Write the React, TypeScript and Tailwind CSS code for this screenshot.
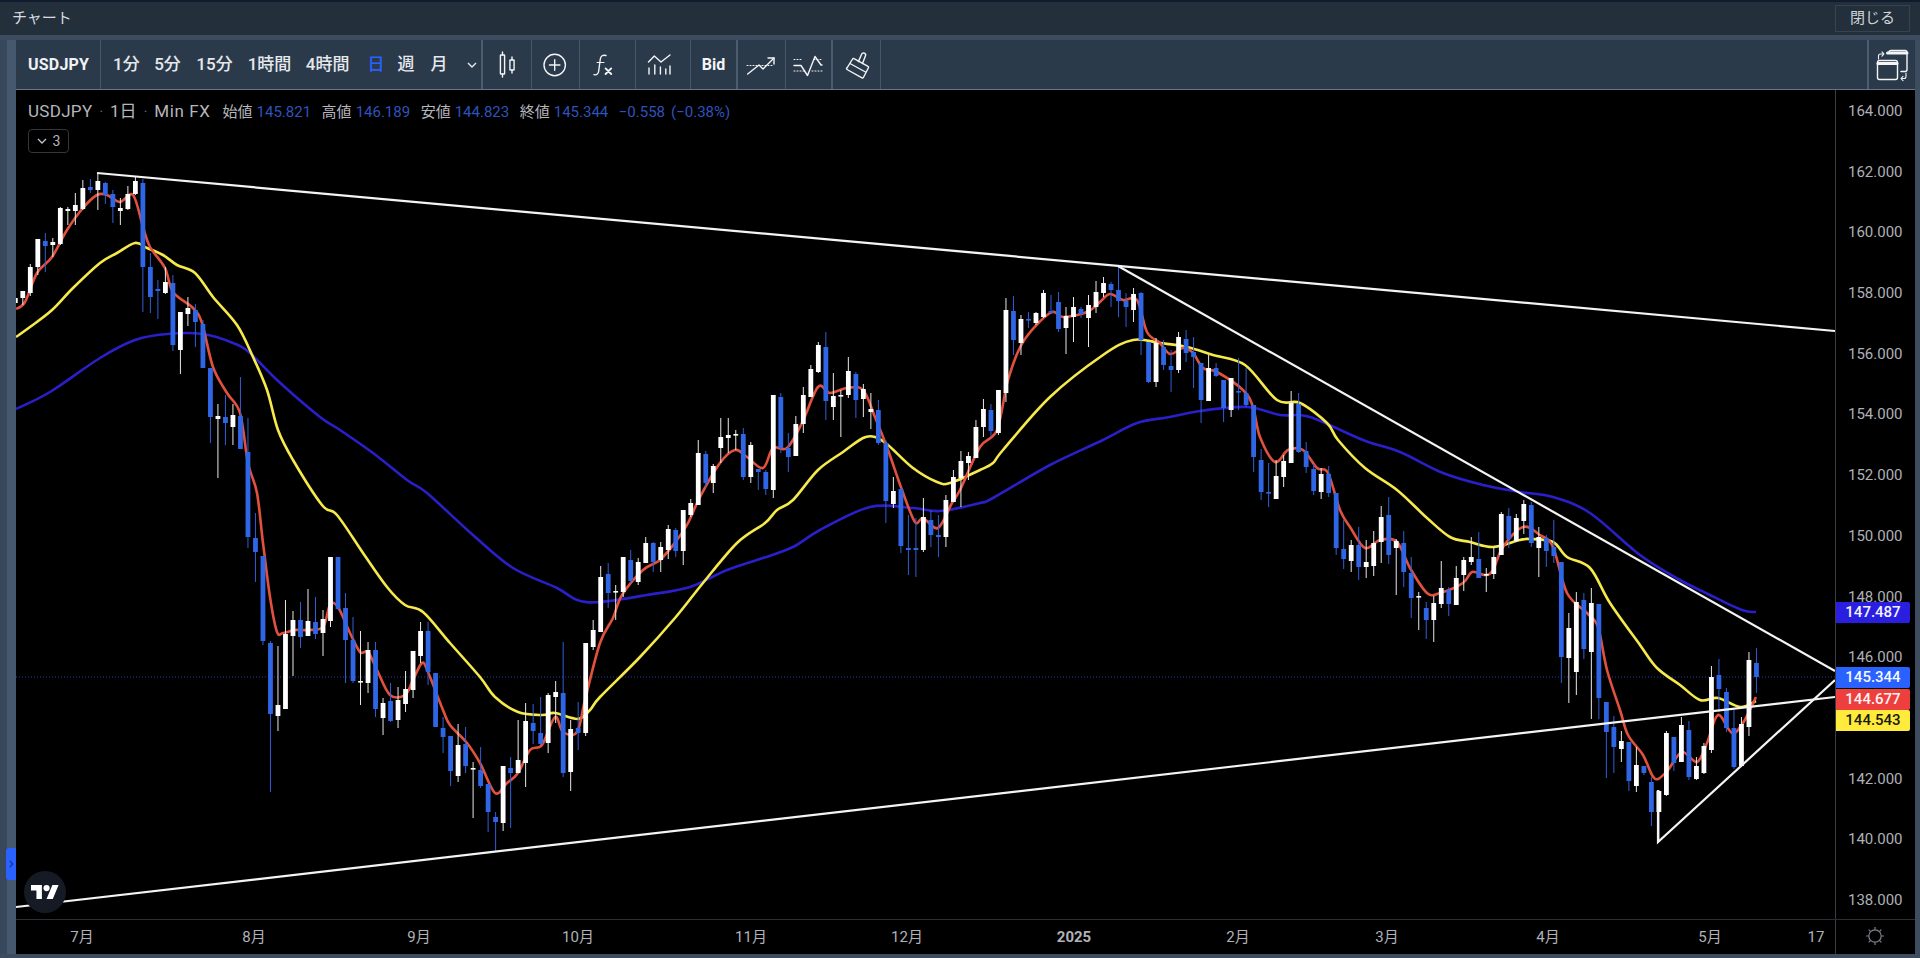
import React from "react";

type C = [number, number, number, number, number];
// bodyTop, bodyBottom, wickTop, wickBottom, blue?
const candles: C[] = [
[298,303,295,307,0],[291,298,291,305,0],[267,293,264,296,0],[239,267,239,275,0],[241,246,233,272,1],[242,245,238,257,0],[208,244,207,245,0],[209,211,207,225,0],[205,211,193,225,0],[188,209,180,210,0],
[187,190,179,193,1],[181,190,173,210,0],[183,195,182,204,1],[194,207,190,223,1],[208,211,198,225,0],[194,209,186,210,0],[181,194,177,195,0],[183,267,179,312,1],[267,297,253,313,1],[289,291,280,319,1],
[282,293,267,294,0],[283,345,275,351,1],[312,350,312,374,0],[308,314,297,326,0],[310,322,304,347,1],[324,368,320,368,1],[368,417,368,443,1],[416,419,404,478,0],[417,423,395,445,1],[415,427,404,445,0],
[416,449,377,449,1],[452,537,418,548,1],[538,552,513,582,1],[556,641,556,645,1],[643,714,641,792,1],[705,716,646,731,0],[634,709,600,709,0],[620,636,611,676,0],[620,637,602,648,1],[621,636,589,636,0],
[622,634,597,639,1],[619,633,610,656,0],[557,621,557,627,0],[557,609,557,610,1],[608,640,593,683,1],[640,681,617,683,1],[681,682,631,705,0],[650,683,642,693,0],[650,709,642,717,1],[703,718,698,735,0],
[701,721,683,722,1],[700,720,687,728,0],[689,704,671,712,0],[651,690,651,698,0],[631,656,622,663,0],[631,672,622,685,1],[673,727,673,727,1],[728,737,717,753,1],[736,771,736,786,1],[745,776,724,782,0],
[744,766,727,773,1],[768,769,762,818,0],[770,786,747,788,1],[784,812,784,832,1],[817,822,812,852,1],[766,823,766,831,0],[768,773,757,828,1],[760,773,720,773,0],[721,763,703,787,0],[723,731,704,744,1],
[733,744,697,745,1],[695,743,693,753,0],[692,697,681,723,0],[693,773,642,777,1],[729,772,720,791,0],[728,733,702,750,1],[643,733,643,736,0],[630,647,620,650,0],[577,632,566,632,0],[574,593,563,608,1],
[591,592,585,620,0],[557,592,557,597,0],[560,581,550,583,1],[562,582,558,585,0],[543,563,537,563,0],[543,562,542,572,1],[547,560,542,572,0],[529,550,525,559,0],[530,551,528,557,1],[510,551,510,565,0],
[503,515,499,517,0],[453,505,440,505,0],[454,483,451,488,1],[466,483,464,493,0],[437,448,418,463,0],[435,438,418,453,0],[434,435,430,450,0],[434,477,428,480,1],[445,477,442,483,0],[469,472,469,490,1],
[472,489,470,495,1],[395,490,395,498,0],[397,448,393,453,1],[448,457,433,472,1],[424,456,416,456,0],[395,424,387,433,0],[369,397,365,397,0],[345,372,342,373,0],[347,401,332,420,1],[396,407,373,420,0],
[395,396,390,437,0],[371,395,357,398,0],[374,400,372,418,1],[389,399,384,417,0],[409,412,393,429,0],[410,443,400,445,1],[443,501,440,523,1],[491,504,477,508,0],[489,546,488,553,1],[548,550,515,575,1],
[548,550,518,577,1],[517,550,498,552,0],[520,535,510,547,1],[535,537,515,557,1],[500,537,495,547,0],[477,502,470,502,0],[461,478,451,507,0],[456,463,452,480,0],[427,458,420,458,0],[409,427,399,437,0],
[410,431,404,437,1],[390,433,390,435,0],[310,393,298,402,0],[311,340,296,355,1],[319,343,315,355,0],[319,320,312,328,1],[313,323,312,325,0],[293,317,290,318,0],[311,313,295,313,1],[302,329,292,332,1],
[316,328,307,354,0],[307,317,297,342,0],[309,314,307,318,1],[305,318,295,347,0],[292,307,281,313,0],[283,293,277,297,0],[284,290,282,307,1],[290,301,267,317,1],[301,307,293,327,1],[294,310,288,322,0],
[293,340,292,355,1],[342,382,342,383,1],[343,382,338,387,0],[347,365,340,370,1],[366,370,350,392,1],[337,370,332,373,0],[339,353,330,362,1],[352,357,337,388,1],[363,400,363,423,1],[368,401,355,401,0],
[368,376,363,377,1],[380,408,380,422,1],[378,410,378,417,0],[391,392,358,410,1],[393,405,368,407,1],[405,457,405,472,1],[460,492,449,500,1],[492,493,463,507,1],[476,499,460,499,0],[461,477,455,487,0],
[403,463,391,463,0],[404,452,393,453,1],[451,467,442,473,1],[469,491,464,495,1],[474,492,468,499,0],[474,493,466,497,1],[493,548,493,555,1],[549,559,520,569,1],[545,561,540,572,0],[545,567,527,580,1],
[562,567,540,578,0],[543,566,531,576,0],[517,542,506,563,0],[515,555,497,564,1],[541,548,539,595,0],[543,572,531,587,1],[573,598,557,618,1],[596,597,592,630,0],[608,620,602,639,1],[603,620,596,642,0],
[588,604,561,608,0],[590,604,587,616,1],[578,605,566,605,0],[560,575,557,591,0],[557,562,537,565,0],[559,578,532,578,1],[574,575,568,592,0],[557,574,547,579,0],[514,555,512,555,0],[516,539,508,548,1],
[518,541,514,542,0],[504,521,500,534,0],[505,543,502,547,1],[537,548,527,577,0],[538,551,535,567,1],[547,556,520,563,1],[562,657,562,683,1],[628,658,613,703,0],[602,672,592,695,0],[600,649,593,659,1],
[603,652,588,719,0],[604,698,604,719,1],[702,732,702,778,1],[727,747,716,773,1],[741,749,731,762,0],[742,781,742,791,1],[765,786,747,792,0],[766,773,766,775,1],[782,812,777,826,1],[791,812,790,842,0],
[733,795,731,796,0],[737,763,737,771,1],[725,762,717,762,0],[730,777,721,780,1],[766,779,757,780,0],[746,773,743,774,0],[677,750,666,753,0],[675,689,659,712,1],[692,728,688,732,1],[728,767,710,769,1],
[724,766,717,767,0],[660,727,652,736,0],[663,677,648,693,1],
];

const red = "16,309 25,302 37,273 52,257 67,230 83,208 97,195 107,195 120,202 133,195 143,227 150,247 165,268 173,292 193,308 202,323 213,367 227,393 240,413 248,463 257,493 263,543 270,597 277,632 283,633 295,630 308,630 323,627 330,605 338,607 350,633 360,652 368,652 377,670 390,695 405,695 413,680 422,663 428,672 443,710 450,725 467,743 480,763 495,793 507,783 518,773 530,750 542,745 555,717 563,732 577,732 585,700 600,643 613,618 622,595 643,570 660,560 677,540 688,523 700,497 720,463 735,450 747,457 763,468 773,448 787,448 802,423 818,387 830,393 847,388 863,390 875,417 888,450 902,490 915,522 923,518 938,528 952,503 960,490 980,447 997,430 1008,380 1023,342 1050,313 1063,317 1087,312 1100,302 1110,294 1123,300 1137,300 1147,332 1160,343 1170,354 1183,348 1193,353 1203,368 1217,372 1243,390 1253,407 1260,437 1275,462 1288,450 1303,450 1317,468 1328,473 1340,510 1350,527 1365,548 1380,540 1397,542 1410,568 1427,593 1440,593 1463,583 1472,572 1485,575 1493,570 1503,547 1523,527 1540,535 1553,547 1567,593 1587,613 1598,627 1607,670 1620,710 1628,735 1643,755 1652,775 1658,779 1668,770 1682,752 1697,762 1707,743 1718,715 1732,733 1743,723 1756,697";
const yellow = "16,337 30,327 52,310 73,288 100,263 117,253 135,243 147,248 163,255 177,265 195,273 213,297 237,325 253,357 267,390 278,430 293,460 322,505 337,515 363,553 387,587 405,605 423,612 450,643 480,677 495,697 518,712 542,715 555,713 578,719 590,710 600,697 640,657 675,618 703,583 737,543 765,523 777,510 793,500 818,470 843,452 863,438 875,437 888,445 913,468 937,482 950,483 980,470 993,463 1003,450 1050,397 1103,355 1133,340 1160,343 1187,347 1213,355 1245,365 1277,400 1300,403 1327,423 1338,440 1365,468 1397,490 1427,518 1450,537 1470,542 1493,547 1520,540 1530,539 1553,542 1567,557 1590,568 1610,603 1640,645 1657,668 1680,685 1700,700 1718,698 1740,707 1756,701";
const navy = "16,409 50,392 100,358 135,340 167,334 203,334 233,343 250,353 277,380 320,417 340,430 373,453 407,480 427,493 473,535 513,568 557,588 577,600 600,602 647,595 690,587 727,570 763,558 793,547 820,530 870,507 913,508 940,511 980,503 993,498 1050,465 1103,440 1137,423 1170,417 1200,411 1247,407 1280,415 1310,417 1363,440 1400,452 1443,473 1483,485 1520,492 1553,497 1590,513 1640,555 1680,580 1710,595 1742,610 1756,612";

// Catmull-Rom smoothing of a polyline into a cubic path
function smooth(points: string): string {
  const p = points.split(" ").map((s) => s.split(",").map(Number));
  let d = `M${p[0][0]} ${p[0][1]}`;
  for (let i = 0; i < p.length - 1; i++) {
    const a = p[Math.max(i - 1, 0)];
    const b = p[i];
    const c = p[i + 1];
    const e = p[Math.min(i + 2, p.length - 1)];
    const c1x = b[0] + (c[0] - a[0]) / 6;
    const c1y = b[1] + (c[1] - a[1]) / 6;
    const c2x = c[0] - (e[0] - b[0]) / 6;
    const c2y = c[1] - (e[1] - b[1]) / 6;
    d += `C${c1x.toFixed(1)} ${c1y.toFixed(1)} ${c2x.toFixed(1)} ${c2y.toFixed(1)} ${c[0]} ${c[1]}`;
  }
  return d;
}

const prices = ["164.000","162.000","160.000","158.000","156.000","154.000","152.000","150.000","148.000","146.000","144.000","142.000","140.000","138.000"];

const W = 1819;
const H = 829;

function Chart() {
  return (
    <svg viewBox={`16 90 ${W} ${H}`} className="block h-full w-full" aria-hidden="true">
      <line x1="16" y1="677" x2="1835" y2="677" stroke="#2a48c0" strokeWidth="1" strokeDasharray="1 2" opacity="0.85" />
      <path d={smooth(navy)} fill="none" stroke="#2a1fc8" strokeWidth="2.6" strokeLinejoin="round" />
      <path d={smooth(yellow)} fill="none" stroke="#f6ea4a" strokeWidth="2.6" strokeLinejoin="round" />
      <path d={smooth(red)} fill="none" stroke="#e2513e" strokeWidth="2.6" strokeLinejoin="round" />
      {candles.map((c, i) => {
        const x = 15.3 + 7.505 * i;
        const col = c[4] ? "#2f66e6" : "#ffffff";
        return (
          <g key={i}>
            <line x1={x} x2={x} y1={c[2]} y2={c[3]} stroke={c[4] ? "#2f5fd8" : "#e8e8e8"} strokeWidth="1" />
            <rect x={x - 2.4} y={c[0]} width="4.8" height={Math.max(c[1] - c[0], 1.6)} fill={col} />
          </g>
        );
      })}
      <g stroke="#f4f4f4" strokeWidth="2.2" fill="none">
        <line x1="97" y1="173" x2="1835" y2="331" />
        <line x1="1118" y1="266" x2="1835" y2="671" />
        <line x1="16" y1="907" x2="1835" y2="697" />
        <polyline points="1658,790 1658,842 1835,680" />
      </g>
    </svg>
  );
}

const sep = "border-r border-[#47566a]";
const sepThick = "border-r-2 border-[#4d5c70]";

function Sv({ vb, w, children }: { vb: string; w: string; children: React.ReactNode }) {
  return (
    <svg viewBox={vb} className={`block h-[49px] ${w}`} fill="none" stroke="#f2f4f6" strokeWidth="1.4" strokeLinecap="round" strokeLinejoin="round" aria-hidden="true">
      {children}
    </svg>
  );
}

function Toolbar() {
  return (
    <div className="flex h-[50px] shrink-0 border-b border-[#66758a] bg-[#2b3a4b] text-[17px] font-medium text-[#e6e9ec]">
      <div className={`flex w-[85px] items-center pl-[12px] text-[16px] font-bold tracking-[0.2px] text-[#f0f2f4] ${sep}`}>USDJPY</div>
      <div className={`flex w-[382px] items-center pl-[12px] ${sepThick}`}>
        <span>1分</span>
        <span className="ml-[14.5px]">5分</span>
        <span className="ml-[15.5px]">15分</span>
        <span className="ml-[15px]">1時間</span>
        <span className="ml-[14.5px]">4時間</span>
        <span className="ml-[18px] text-[#2962ff]">日</span>
        <span className="ml-[13px]">週</span>
        <span className="ml-[16px]">月</span>
        <svg viewBox="0 0 10 6" className="ml-[19px] h-[6px] w-[10px]" fill="none" stroke="#e6e9ec" strokeWidth="1.4" aria-hidden="true"><path d="M1 1l4 4 4-4" /></svg>
      </div>
      <div className={`w-[49px] ${sep}`}>
        <Sv vb="484 40 48 49" w="w-[48px]">
          <path d="M503.5 52v3M503.5 74v3M513 57v3M513 70v3" />
          <rect x="501.4" y="55" width="4.2" height="19" rx="0.5" />
          <rect x="510.9" y="60" width="4.2" height="10" rx="0.5" />
        </Sv>
      </div>
      <div className={`w-[48px] ${sep}`}>
        <Sv vb="533 40 47 49" w="w-[47px]">
          <circle cx="555.7" cy="65" r="10.7" />
          <path d="M550.5 65h10.4M555.7 59.8v10.4" />
        </Sv>
      </div>
      <div className={`w-[56px] ${sep}`}>
        <Sv vb="581 40 55 49" w="w-[55px]">
          <path d="M607 55.5c-3.2-1-5.2.6-5.7 3.5l-1.6 12c-.4 3-2.3 4.6-4.7 3.6" />
          <path d="M598 62.5h7" strokeWidth="1" />
          <path d="M606.6 68.4l5.6 5.6M612.2 68.4l-5.6 5.6" strokeWidth="1.9" />
        </Sv>
      </div>
      <div className={`w-[55px] ${sep}`}>
        <Sv vb="637 40 54 49" w="w-[54px]">
          <path d="M649.5 62l5.8-6 6.7 6 9-7" />
          <path d="M650 68v6M655.8 65v9M661.4 67v7M666.8 69v5M671 66v8" />
        </Sv>
      </div>
      <div className={`flex w-[47px] items-center justify-center text-[16px] font-bold text-[#f4f6f8] ${sepThick}`}>Bid</div>
      <div className={`w-[48px] ${sep}`}>
        <Sv vb="739 40 47 49" w="w-[47px]">
          <path d="M748 65.5h27" strokeWidth="1" strokeDasharray="1 2" />
          <path d="M748.7 74l11.3-9 4 4 11-11" />
          <path d="M769 58h6v6" />
        </Sv>
      </div>
      <div className={`w-[47px] ${sepThick}`}>
        <Sv vb="787 40 45 49" w="w-[45px]">
          <path d="M795 59.5h7M815 59.5h8M795 71h10M813 71h10" strokeWidth="1" strokeDasharray="1 2" />
          <path d="M795 65.5h7l6.5 10 7.5-19 6 8.5h1" />
        </Sv>
      </div>
      <div className={`w-[48px] ${sep}`}>
        <Sv vb="834 40 47 49" w="w-[47px]">
          <path d="M847.6 68.6l6-9.6a1 1 0 0 1 1.4-.4l14 7.8a1 1 0 0 1 .4 1.4l-5 9.7a1 1 0 0 1-1.4.4l-15-8.4a1 1 0 0 1-.4-1.4z" />
          <path d="M851 63.5l15.5 8.5" />
          <path d="M859.4 61.6l3.2-7.4a2 2 0 0 1 3.8 1.8l-2.9 7.6" />
        </Sv>
      </div>
      <div className={`flex-1 ${sepThick}`} />
      <div className="w-[46px]">
        <Sv vb="1869 40 46 49" w="w-[46px]">
          <path d="M1889 53v-.5a2 2 0 0 1 2-2h14a2 2 0 0 1 2 2v17a2 2 0 0 1-2 2h-4" />
          <path d="M1887.5 53h19.5" strokeWidth="3" />
          <rect x="1877.5" y="60.5" width="20" height="19" rx="2" />
          <path d="M1878 63.5h19" strokeWidth="3" />
          <path d="M1878.5 59v-3a2 2 0 0 1 2-2h3M1882 51.8l2 2.2-2 2.2" strokeWidth="1.1" />
          <path d="M1906 73v3.5a2 2 0 0 1-2 2h-3M1903 76.3l-2 2.2 2 2.2" strokeWidth="1.1" />
        </Sv>
      </div>
    </div>
  );
}

function Legend() {
  return (
    <div className="absolute left-[12px] top-[12px] flex flex-col items-start">
      <div className="flex h-[20px] items-center whitespace-nowrap text-[15px] text-[#b4b6bc]">
        <span className="text-[17px] tracking-[0.3px]">USDJPY</span>
        <span className="ml-[7px] mr-[7px] text-[14px] text-[#6b6e76]">·</span>
        <span className="text-[17px]">1日</span>
        <span className="ml-[7px] mr-[7px] text-[14px] text-[#6b6e76]">·</span>
        <span className="text-[17px] tracking-[0.6px]">Min FX</span>
        <span className="ml-[12px]">始値</span>
        <span className="ml-[4px] text-[#2f52bd]">145.821</span>
        <span className="ml-[10.5px]">高値</span>
        <span className="ml-[4px] text-[#2f52bd]">146.189</span>
        <span className="ml-[10.5px]">安値</span>
        <span className="ml-[4px] text-[#2f52bd]">144.823</span>
        <span className="ml-[10.5px]">終値</span>
        <span className="ml-[4px] text-[#2f52bd]">145.344</span>
        <span className="ml-[10.5px] text-[#2f52bd]">−0.558</span>
        <span className="ml-[6px] text-[#2f52bd]">(−0.38%)</span>
      </div>
      <div className="mt-[7px] flex h-[24px] w-[41px] items-center justify-center gap-[6px] rounded-[4px] border border-[#34363c] text-[14px] text-[#b4b6bc]">
        <svg viewBox="0 0 10 6" className="h-[6px] w-[10px]" fill="none" stroke="#c4c6cc" strokeWidth="1.3" aria-hidden="true"><path d="M1 1l4 4 4-4" /></svg>
        <span>3</span>
      </div>
    </div>
  );
}

const tag = "absolute left-0 flex h-[21px] w-[74px] items-center justify-center rounded-r-[2px] text-[15px] font-medium";

function PriceAxis() {
  return (
    <div className="relative h-full w-[80px] shrink-0 border-l border-[#3a3c42] bg-black">
      <div className="flex h-full flex-col justify-between pb-[9px] pl-[12px] pt-[11px] text-[15px] leading-[20px] text-[#aeb0b6]">
        {prices.map((p) => <span key={p}>{p}</span>)}
      </div>
      <div className={`${tag} top-[512px] bg-[#2a1fe0] text-[#f4f4ff]`}>147.487</div>
      <div className={`${tag} top-[577px] bg-[#2962ff] text-[#f4f8ff]`}>145.344</div>
      <div className={`${tag} top-[599px] bg-[#ee3f3f] text-[#fff4f4]`}>144.677</div>
      <div className={`${tag} top-[620px] bg-[#ffeb3b] text-[#1a1a10]`}>144.543</div>
    </div>
  );
}

function TimeAxis() {
  return (
    <div className="flex h-[35px] shrink-0 border-t border-[#2c2e34] bg-black text-[15px] text-[#b0b2b8]">
      <div className="flex w-[1819px] items-center text-center">
        <span className="mr-[17px] w-[132px]">7月</span>
        <span className="w-[178px]">8月</span>
        <span className="w-[152px]">9月</span>
        <span className="w-[166px]">10月</span>
        <span className="w-[180px]">11月</span>
        <span className="w-[132px]">12月</span>
        <span className="w-[202px] font-bold">2025</span>
        <span className="w-[126px]">2月</span>
        <span className="w-[172px]">3月</span>
        <span className="w-[150px]">4月</span>
        <span className="w-[174px]">5月</span>
        <span className="w-[38px]">17</span>
      </div>
      <div className="flex w-[80px] items-center justify-center border-l border-[#3a3c42] pb-[2px] pr-[2px]">
        <svg viewBox="0 0 20 20" className="h-[20px] w-[20px]" fill="none" stroke="#7f828a" strokeWidth="1.2" aria-hidden="true">
          <circle cx="10" cy="10" r="6.2" />
          <path d="M10 1v2.6M10 16.4V19M1 10h2.6M16.4 10H19M3.6 3.6l1.8 1.8M14.6 14.6l1.8 1.8M16.4 3.6l-1.8 1.8M5.4 14.6l-1.8 1.8" />
        </svg>
      </div>
    </div>
  );
}

export default function App() {
  return (
    <div className="flex h-[958px] w-[1920px] flex-col overflow-hidden bg-[#3d4c5e] font-['Roboto','Noto_Sans_CJK_JP',sans-serif]">
      <div className="h-[2px] shrink-0 bg-[#101b2e]" />
      <div className="flex h-[33px] shrink-0 items-center justify-between bg-[#242f3c] pl-[12px] pr-[10px] text-[15px] text-[#d8dce0]">
        <span>チャート</span>
        <div className="flex h-[27px] w-[75px] items-center justify-center border border-[#38434f] text-[#cfd4d9]">閉じる</div>
      </div>
      <div className="h-[5px] shrink-0 bg-[#3d4c5e]" />
      <div className="flex min-h-0 flex-1">
        <div className="relative flex w-[16px] shrink-0">
          <div className="w-[7px] bg-[#37485c]" />
          <div className="flex-1 bg-[#46586d]" />
          <div className="absolute left-[6px] top-[808px] flex h-[32px] w-[10px] items-center justify-center rounded-l-[3px] bg-[#2962ff]">
            <svg viewBox="0 0 6 10" className="h-[8px] w-[5px]" fill="none" stroke="#16348c" strokeWidth="1.6" aria-hidden="true"><path d="M1 1l3.5 4L1 9" /></svg>
          </div>
        </div>
        <div className="flex min-w-0 flex-1 flex-col">
          <Toolbar />
          <div className="flex h-[829px] shrink-0 bg-black">
            <div className="relative h-full w-[1819px] shrink-0">
              <Chart />
              <Legend />
              <div className="absolute left-[8px] top-[781px] flex h-[42px] w-[42px] items-center justify-center rounded-full bg-[#151a24]">
                <svg viewBox="0 0 36 18" className="h-[14px] w-[28px]" fill="#ffffff" aria-hidden="true">
                  <path d="M14 18H7V7H0V0h14v18zM28 18h-8l7.5-18h8L28 18z" />
                  <circle cx="20" cy="4" r="4" />
                </svg>
              </div>
            </div>
            <PriceAxis />
          </div>
          <TimeAxis />
        </div>
        <div className="w-[5px] shrink-0 bg-[#3d4c5e]" />
      </div>
      <div className="h-[4px] shrink-0 bg-[#3d4c5e]" />
    </div>
  );
}
